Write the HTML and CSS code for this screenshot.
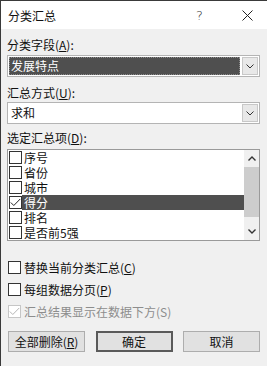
FILE: index.html
```html
<!DOCTYPE html>
<html lang="zh-CN">
<head>
<meta charset="utf-8">
<link rel="stylesheet" href="styles.css">
</head>
<body>
<div class="dialog">
  <div class="titlebar">
    <span class="title">分类汇总</span>
    <span class="help">?</span>
    <span class="close"><svg width="11" height="11" viewBox="0 0 11 11"><path d="M0.5 0.5L10.5 10.5M10.5 0.5L0.5 10.5" stroke="#222" stroke-width="1" fill="none"/></svg></span>
  </div>
  <div class="content">
    <div class="label l1">分类字段(<u>A</u>):</div>
    <div class="combo">
      <div class="combo-value selected"><span>发展特点</span></div>
      <div class="combo-btn"><svg width="8" height="5" viewBox="0 0 8 5"><path d="M0.5 0.5L4 4L7.5 0.5" stroke="#333" fill="none"/></svg></div>
    </div>
    <div class="label l2">汇总方式(<u>U</u>):</div>
    <div class="combo">
      <div class="combo-value"><span>求和</span></div>
      <div class="combo-btn"><svg width="8" height="5" viewBox="0 0 8 5"><path d="M0.5 0.5L4 4L7.5 0.5" stroke="#333" fill="none"/></svg></div>
    </div>
    <div class="label l3">选定汇总项(<u>D</u>):</div>
    <div class="listbox">
      <div class="items">
        <div class="item"><span class="cb"></span><span class="txt">序号</span></div>
        <div class="item"><span class="cb"></span><span class="txt">省份</span></div>
        <div class="item"><span class="cb"></span><span class="txt">城市</span></div>
        <div class="item"><span class="cb checked"><svg width="11" height="9" viewBox="0 0 11 9"><path d="M0.8 4.5L3.8 7.5L10.2 1" stroke="#222" fill="none"/></svg></span><span class="txt sel">得分</span></div>
        <div class="item"><span class="cb"></span><span class="txt">排名</span></div>
        <div class="item"><span class="cb"></span><span class="txt">是否前5强</span></div>
      </div>
      <div class="scrollbar">
        <div class="arrow"><svg width="8" height="5" viewBox="0 0 8 5"><path d="M0.5 4.5L4 1L7.5 4.5" stroke="#333" stroke-width="1.4" fill="none"/></svg></div>
        <div class="track"><div class="thumb"></div></div>
        <div class="arrow"><svg width="8" height="5" viewBox="0 0 8 5"><path d="M0.5 0.5L4 4L7.5 0.5" stroke="#333" stroke-width="1.4" fill="none"/></svg></div>
      </div>
    </div>
    <div class="options">
      <div class="opt"><span class="cb"></span><span>替换当前分类汇总(<u>C</u>)</span></div>
      <div class="opt"><span class="cb"></span><span>每组数据分页(<u>P</u>)</span></div>
      <div class="opt disabled"><span class="cb"><svg width="11" height="9" viewBox="0 0 11 9"><path d="M0.8 4.5L3.8 7.5L10.2 1" stroke="#b5b5b5" fill="none"/></svg></span><span>汇总结果显示在数据下方(S)</span></div>
    </div>
    <div class="buttons">
      <div class="btn">全部删除(<u>R</u>)</div>
      <div class="btn default">确定</div>
      <div class="btn">取消</div>
    </div>
  </div>
</div>
</body>
</html>
```
FILE: styles.css
```css
* { box-sizing: border-box; }
html, body { margin: 0; padding: 0; }
body {
  font-family: "Noto Sans CJK SC", "Noto Sans", sans-serif;
  font-size: 12px;
  color: #111;
  background: #f0f0f0;
}
.dialog {
  width: 267px;
  height: 366px;
  background: #f0f0f0;
  border-left: 1px solid #3a3a3a;
  border-top: 1px solid #3a3a3a;
  overflow: hidden;
}
.titlebar {
  height: 28px;
  background: #fff;
  display: flex;
  align-items: center;
  padding-left: 7px;
}
.title { font-size: 12px; flex: 1; color: #111; }
.help { font-size: 13px; color: #333; width: 12px; margin-right: 34px; font-family: "DejaVu Sans", sans-serif; font-weight: 300; }
.close { width: 11px; margin-right: 14px; display: flex; }
.content { padding: 0 7px 0 6px; }
.label { height: 16px; line-height: 16px; }
.l1 { margin-top: 8px; margin-bottom: 2px; }
.l2 { margin-top: 8px; margin-bottom: 1px; }
.l3 { margin-top: 6px; margin-bottom: 3px; }
u { text-decoration: underline; text-underline-offset: 1px; }
.combo {
  height: 22px;
  border: 1px solid #b4b4b4;
  background: #fff;
  display: flex;
}
.combo-value {
  flex: 1;
  padding: 1px;
  display: flex;
}
.combo-value span {
  flex: 1;
  line-height: 18px;
  padding-left: 2px;
}
.combo-value.selected span {
  background: #4f4f4f;
  color: #fff;
  outline: 1px dotted #8a8a8a;
  outline-offset: -1px;
}
.combo-btn {
  width: 16px;
  margin: 1px;
  border: 1px solid #c8c8c8;
  background: #e8e8e8;
  display: flex;
  align-items: center;
  justify-content: center;
}
.listbox {
  height: 92px;
  border: 1px solid #9a9a9a;
  background: #fff;
  display: flex;
}
.items { flex: 1; }
.item {
  height: 15px;
  display: flex;
  align-items: center;
  padding-left: 1px;
  overflow: hidden;
}
.cb {
  width: 13px;
  height: 13px;
  border: 1px solid #333;
  background: #fff;
  display: flex;
  align-items: center;
  justify-content: center;
  flex: none;
}
.item .txt {
  display: block;
  height: 15px;
  line-height: 15px;
  padding-left: 2px;
  overflow: hidden;
}
.item .txt.sel {
  flex: 1;
  background: #4f4f4f;
  color: #fff;
}
.scrollbar {
  width: 15px;
  background: #f0f0f0;
  display: flex;
  flex-direction: column;
}
.arrow {
  height: 17px;
  display: flex;
  align-items: center;
  justify-content: center;
}
.track { flex: 1; }
.thumb {
  height: 50px;
  background: #cdcdcd;
}
.options { margin-top: 18px; padding-left: 1px; }
.opt {
  height: 16px;
  display: flex;
  align-items: center;
  gap: 3px;
  margin-bottom: 6px;
}
.opt.disabled { color: #8d8d8d; }
.opt.disabled .cb { border-color: #c6c6c6; }
.buttons {
  margin-top: 12px;
  display: flex;
  justify-content: space-between;
  padding-left: 1px;
}
.btn {
  width: 77px;
  height: 21px;
  border: 1px solid #adadad;
  background: #e1e1e1;
  display: flex;
  align-items: center;
  justify-content: center;
}
.btn.default { border: 1px solid #5a5a5a; box-shadow: inset 0 0 0 1px #5a5a5a; }
```
